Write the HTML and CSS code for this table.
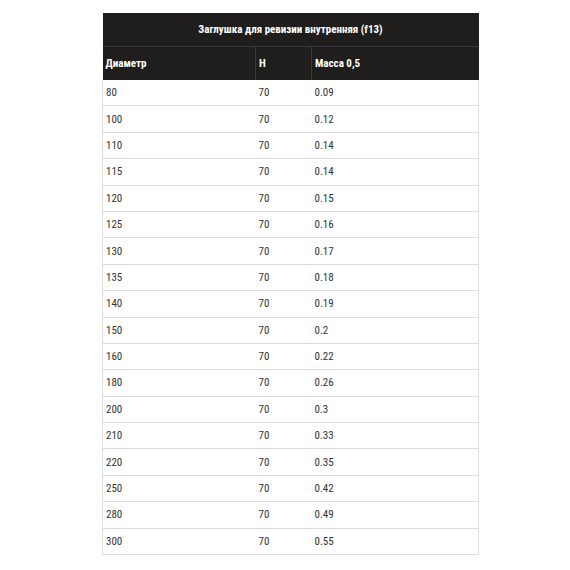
FILE: index.html
```html
<!DOCTYPE html>
<html lang="ru">
<head>
<meta charset="utf-8">
<link rel="stylesheet" href="styles.css">
</head>
<body>
<table class="spec">
  <colgroup><col class="c1"><col class="c2"><col class="c3"></colgroup>
  <thead>
    <tr class="title"><th colspan="3">Заглушка для ревизии внутренняя (f13)</th></tr>
    <tr class="head"><th>Диаметр</th><th>H</th><th>Масса 0,5</th></tr>
  </thead>
  <tbody>
    <tr><td>80</td><td>70</td><td>0.09</td></tr>
    <tr><td>100</td><td>70</td><td>0.12</td></tr>
    <tr><td>110</td><td>70</td><td>0.14</td></tr>
    <tr><td>115</td><td>70</td><td>0.14</td></tr>
    <tr><td>120</td><td>70</td><td>0.15</td></tr>
    <tr><td>125</td><td>70</td><td>0.16</td></tr>
    <tr><td>130</td><td>70</td><td>0.17</td></tr>
    <tr><td>135</td><td>70</td><td>0.18</td></tr>
    <tr><td>140</td><td>70</td><td>0.19</td></tr>
    <tr><td>150</td><td>70</td><td>0.2</td></tr>
    <tr><td>160</td><td>70</td><td>0.22</td></tr>
    <tr><td>180</td><td>70</td><td>0.26</td></tr>
    <tr><td>200</td><td>70</td><td>0.3</td></tr>
    <tr><td>210</td><td>70</td><td>0.33</td></tr>
    <tr><td>220</td><td>70</td><td>0.35</td></tr>
    <tr><td>250</td><td>70</td><td>0.42</td></tr>
    <tr><td>280</td><td>70</td><td>0.49</td></tr>
    <tr><td>300</td><td>70</td><td>0.55</td></tr>
  </tbody>
</table>
</body>
</html>
```
FILE: styles.css
```css
html, body {
  margin: 0;
  padding: 0;
  background: #fff;
}
body {
  padding: 13px 0 0 102px;
  font-family: "Roboto Condensed", "DejaVu Sans Condensed", "Liberation Sans Narrow", Roboto, sans-serif;
  font-stretch: condensed;
}
.spec {
  width: 376px;
  border-collapse: collapse;
  table-layout: fixed;
  font-size: 11px;
  color: #333;
}
.c1 { width: 153px; }
.c2 { width: 56px; }
.c3 { width: 167px; }
.spec th {
  background: #1f1e1d;
  color: #fff;
  font-weight: bold;
  text-align: left;
  padding: 0 3px;
}
.title th {
  text-align: center;
  height: 33px;
  border-bottom: 1px solid #3a3a3a;
}
.head th {
  height: 33px;
  border-right: 1px solid #3a3a3a;
}
.head th:last-child { border-right: none; }
.spec td {
  height: 25.4px;
  padding: 0 3px;
  border-bottom: 1px solid #ddd;
}
.spec tbody tr td:first-child { border-left: 1px solid #ddd; }
.spec tbody tr td:last-child { border-right: 1px solid #ddd; }
.spec tbody tr:first-child td { border-top: none; }
```
